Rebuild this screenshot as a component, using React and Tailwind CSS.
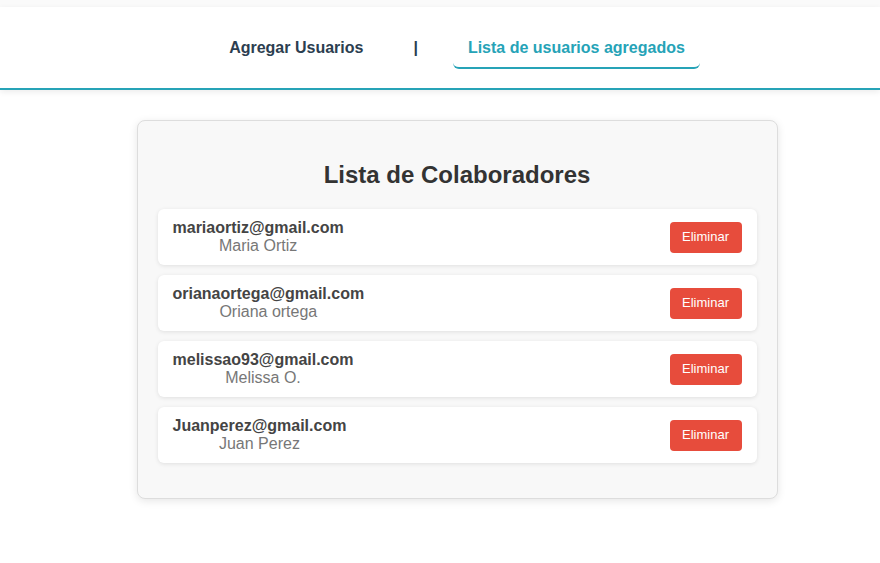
const users = [
  { email: 'mariaortiz@gmail.com', name: 'Maria Ortiz' },
  { email: 'orianaortega@gmail.com', name: 'Oriana ortega' },
  { email: 'melissao93@gmail.com', name: 'Melissa O.' },
  { email: 'Juanperez@gmail.com', name: 'Juan Perez' },
]

function UserRow({ user }) {
  return (
    <div className="flex items-center justify-between h-[56px] px-[15px] bg-white rounded-md shadow-[0_1px_4px_rgba(0,0,0,0.1)]">
      <div className="flex flex-col items-center leading-[18px]">
        <span className="text-[16px] font-bold text-[#444]">{user.email}</span>
        <span className="text-[16px] text-[#777]">{user.name}</span>
      </div>
      <button className="w-[72px] h-[31px] rounded bg-[#e74c3c] text-white text-[13px]">Eliminar</button>
    </div>
  )
}

export default function App() {
  return (
    <div className="min-h-[563px] bg-white font-['Liberation_Sans',Arial,sans-serif]">
      <div className="h-[7px] bg-[#fafafa]" />
      <nav className="h-[83px] border-b-2 border-[#26a3b7] shadow-[0_2px_6px_rgba(0,0,0,0.08)] flex items-start justify-center pl-[34px] pt-[29px]">
        <div className="flex items-start">
          <a className="text-[16px] font-bold text-[#2c3e50] px-[15px] pb-[7px]">Agregar Usuarios</a>
          <span className="text-[16px] font-bold text-[#2c3e50] mx-[35px]">|</span>
          <a className="text-[16px] font-bold text-[#26a3b7] px-[15px] pb-[7px] border-b-2 border-[#26a3b7] rounded-md">Lista de usuarios agregados</a>
        </div>
      </nav>
      <div className="flex justify-center pl-[34px] pt-[30px]">
        <div className="w-[641px] bg-[#f8f8f8] border border-[#ddd] rounded-lg shadow-[0_2px_8px_rgba(0,0,0,0.1)] px-[20px] pt-[39px] pb-[35px]">
          <h2 className="text-center text-[24px] font-bold text-[#333] leading-[30px] mb-[19px]">Lista de Colaboradores</h2>
          <div className="flex flex-col gap-[10px]">
            {users.map(u => <UserRow key={u.email} user={u} />)}
          </div>
        </div>
      </div>
    </div>
  )
}
